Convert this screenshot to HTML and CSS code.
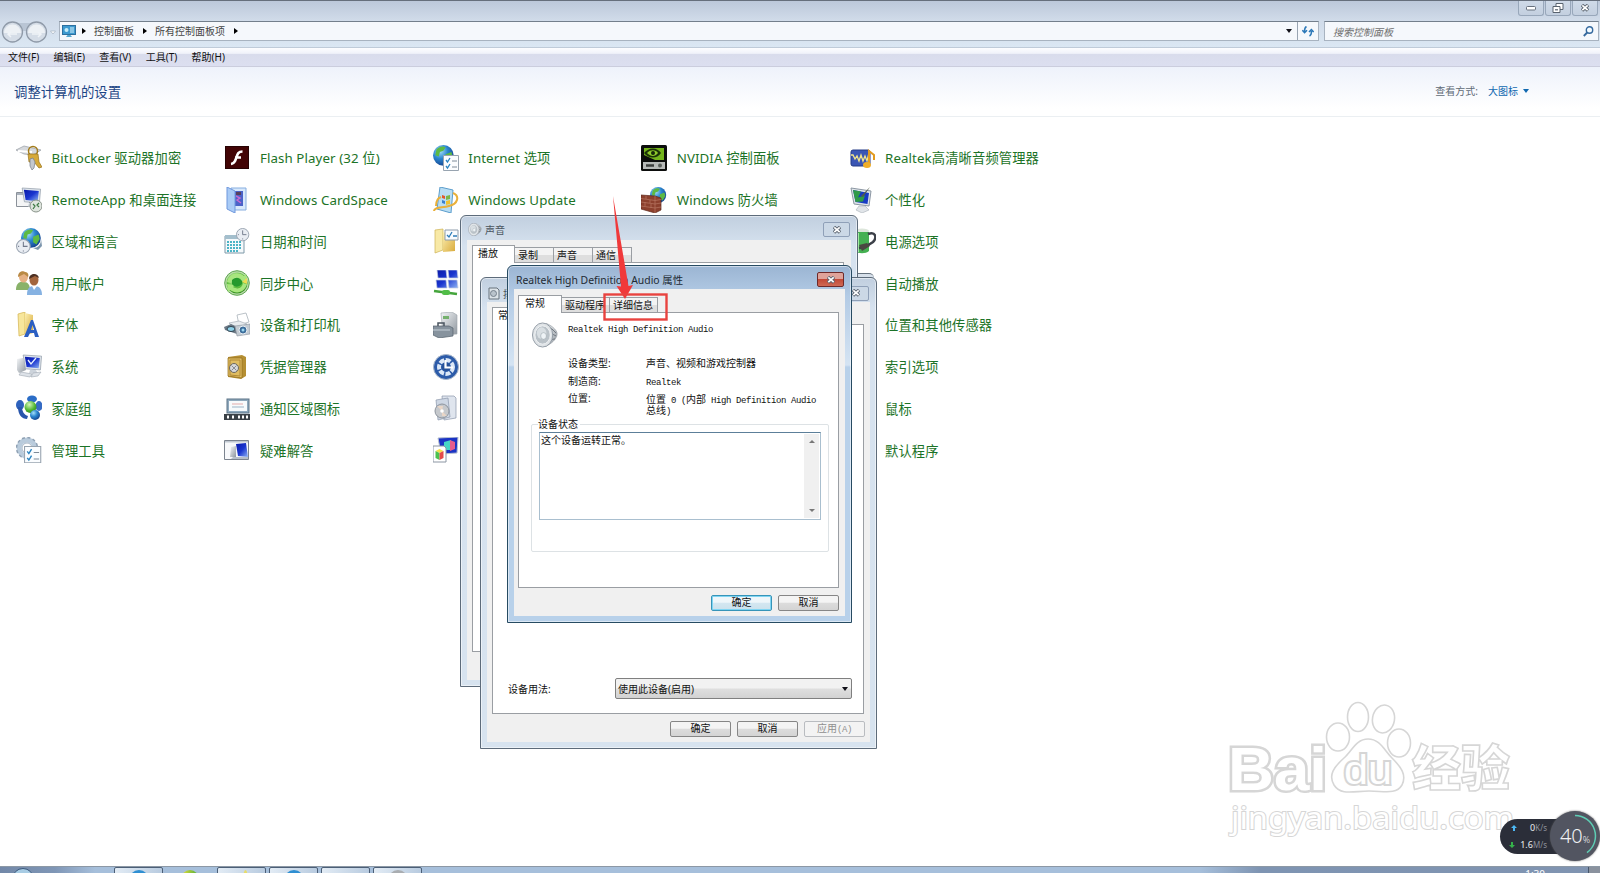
FILE: index.html
```html
<!DOCTYPE html>
<html lang="zh-CN">
<head>
    <meta charset="UTF-8">
    <meta name="viewport" content="width=device-width, initial-scale=1.0">
    <title>所有控制面板项</title>
    <link rel="stylesheet" href="styles.css">
</head>
<body>
    <!-- 共用图形 -->
    <svg class="defs" width="0" height="0">
        <defs>
            <linearGradient id="gBlue" x1="0" y1="0" x2="1" y2="1">
                <stop offset="0" stop-color="#0a1aa8"/><stop offset=".5" stop-color="#1a35cf"/><stop offset="1" stop-color="#8fb4f4"/>
            </linearGradient>
            <radialGradient id="gGlobe" cx=".35" cy=".3" r=".8">
                <stop offset="0" stop-color="#a5e0f8"/><stop offset=".45" stop-color="#2b86cf"/><stop offset="1" stop-color="#123a86"/>
            </radialGradient>
            <radialGradient id="gGreen" cx=".4" cy=".3" r=".8">
                <stop offset="0" stop-color="#d5f7b8"/><stop offset=".6" stop-color="#4fb52f"/><stop offset="1" stop-color="#2b7d1e"/>
            </radialGradient>
            <linearGradient id="gGold" x1="0" y1="0" x2="1" y2="1">
                <stop offset="0" stop-color="#fbeeb0"/><stop offset="1" stop-color="#d9ab3c"/>
            </linearGradient>
            <linearGradient id="gGrey" x1="0" y1="0" x2="1" y2="1">
                <stop offset="0" stop-color="#f4f6f8"/><stop offset="1" stop-color="#8f979f"/>
            </linearGradient>
            <g id="globe">
                <circle cx="9" cy="9" r="9" fill="url(#gGlobe)"/>
                <path d="M3 4c3-3 6-3 8-2l-2 3-3 1-1 4-3-1zM11 8l5-2 1 4-3 5-3-2z" fill="#5dba44"/>
            </g>
            <g id="clock">
                <circle cx="7" cy="7" r="6.5" fill="#e9edf3" stroke="#99a3b0"/>
                <path d="M7 2.5V7h4M7 11v1M2 7h1" fill="none" stroke="#71798a"/>
            </g>
            <g id="checks">
                <path d="M.5.5h15v15H.5z" fill="#fbfdff" stroke="#98a4b0"/>
                <path d="M3 5l1.5 2L7 3M3 11l1.500 2L7 9" fill="none" stroke="#2a83c0" stroke-width="1.300"/>
                <path d="M9 6h5M9 12h5" stroke="#7d8a98"/>
            </g>
            <g id="screen">
                <path d="M1 0l16 1-1 12-13-1z" fill="#dfe5ec" stroke="#8c97a5" stroke-width=".6"/>
                <path d="M2.500 1.500l13 1-1 9-10.500-1z" fill="url(#gBlue)"/>
                <path d="M7 13h5l2 3H6z" fill="#ccd3db"/>
            </g>
            <g id="x">
                <path d="M1 1l6 5.500M7 1L1 6.500" stroke="#5b6470" stroke-width="3.400"/>
                <path d="M1.300 1.300l5.400 4.900M6.700 1.300L1.300 6.200" stroke="#fff" stroke-width="1.700"/>
            </g>
            <g id="speaker">
                <path d="M15 1c7 3 12 8 11 12-1 5-6 9-12 12z" fill="url(#gGrey)" stroke="#8d949c" stroke-width=".6"/>
                <path d="M20 6l5 5M21 12l4 2M19 18l5-1" stroke="#6f767e"/>
                <ellipse cx="11" cy="13" rx="10.500" ry="12.500" fill="#dfe3e6" stroke="#929ba4"/>
                <ellipse cx="11" cy="13" rx="8" ry="9.500" fill="#bac2c8" stroke="#f1f4f6"/>
                <ellipse cx="10" cy="11" rx="5" ry="6" fill="#d9dfe3"/>
                <ellipse cx="12" cy="14" rx="3" ry="3.500" fill="#eef3f6" stroke="#98a2aa" stroke-width=".6"/>
            </g>
        </defs>
    </svg>

    <div class="window">
        <!-- 标题栏 -->
        <div class="titlebar">
            <span class="cap-btn"><svg width="10" height="5"><rect x=".5" y=".5" width="9" height="3.500" rx="1" fill="#fff" stroke="#67707d"/></svg></span>
            <span class="cap-btn"><svg width="12" height="10"><path d="M4 .5h7v6H4z" fill="#fff" stroke="#59636f"/><path d="M1 3.500h7v6H1z" fill="#fff" stroke="#59636f"/><path d="M3 6h3v1.500H3z" fill="#7a838e"/></svg></span>
            <span class="cap-btn"><svg width="8" height="8"><use href="#x"/></svg></span>
        </div>

        <!-- 地址栏 -->
        <div class="navbar">
            <svg class="nav-arrows" width="58" height="24" viewBox="0 0 58 24">
                <path d="M12 2h24v8H12z" fill="#b9c5d4"/>
                <circle cx="12.500" cy="11" r="10" fill="#d5dde7" stroke="#8f9aa8" stroke-width="1.300"/>
                <circle cx="36.500" cy="11" r="10" fill="#d5dde7" stroke="#8f9aa8" stroke-width="1.300"/>
                <path d="M4 12a8.500 8.500 0 0 1 17 0zM28 12a8.500 8.500 0 0 1 17 0z" fill="#edf1f5"/>
                <path d="M8 13h9M11 11l-3 2 3 3M32 13h9M38 11l3 2-3 3" fill="none" stroke="#eff3f7" stroke-width="1.500"/>
                <path d="M50.500 10h5l-2.500 3z" fill="#fff" stroke="#a5b1c0" stroke-width=".7"/>
            </svg>
            <div class="address">
                <svg class="addr-icon" width="14" height="13" viewBox="0 0 14 13">
                    <rect x=".5" y=".5" width="13" height="9" fill="#3d9ad0" stroke="#2c6f9f"/>
                    <circle cx="4.500" cy="5" r="2" fill="#c5ecf9"/><path d="M8 3h4M8 5h4M8 7h4" stroke="#d9f1fb"/>
                    <path d="M4 12h6L8.500 10h-3z" fill="#56a7cf"/>
                </svg>
                <i class="tri-right"></i><span class="crumb">控制面板</span>
                <i class="tri-right"></i><span class="crumb">所有控制面板项</span>
                <i class="tri-right"></i>
                <i class="tri-down push"></i>
                <span class="refresh">
                    <svg width="12" height="11" viewBox="0 0 12 11"><path d="M4.500.5c-2 1-2 3-2 5M.3 4.200l2.300 2.500L5 4.200M7.500 10c2-1 2-3 2-5M7 6l2.400-2.500L11.700 6" fill="none" stroke="#2b78b8" stroke-width="1.500"/></svg>
                </span>
            </div>
            <div class="search">
                <span>搜索控制面板</span>
                <svg width="11" height="11" viewBox="0 0 11 11"><circle cx="6.500" cy="4" r="3.200" fill="#f4fbff" stroke="#35699e" stroke-width="1.400"/><path d="M4.200 6.500L.8 10" stroke="#35699e" stroke-width="1.800"/></svg>
            </div>
        </div>

        <!-- 菜单栏 -->
        <div class="menubar">
            <span>文件(F)</span><span>编辑(E)</span><span>查看(V)</span><span>工具(T)</span><span>帮助(H)</span>
        </div>

        <div class="header">
            <h1>调整计算机的设置</h1>
            <div class="view-mode"><span>查看方式:</span><a>大图标<i class="tri-down"></i></a></div>
        </div>

        <!-- 控制面板项 -->
        <div class="items">
            <div class="col">
                <div class="item">
                    <svg viewBox="0 0 26 26"><path d="M0 5l8-4 17 4-8 5-9-1z" fill="#d6d9dd" stroke="#969ca4" stroke-width=".7"/><path d="M2 6l14 1" stroke="#fff" stroke-width="2"/><circle cx="17" cy="6" r="4.500" fill="none" stroke="#a27b1a" stroke-width="1.500"/><path d="M12 9h10l1 8 3 5-3 1-5-6h-5z" fill="#d6a939" stroke="#96711b" stroke-width=".7"/><path d="M14 14l3-1 2 4-1 6-2 2-2-4z" fill="#c4c8ce" stroke="#747b86" stroke-width=".7"/></svg>
                    <span>BitLocker 驱动器加密</span>
                </div>
                <div class="item">
                    <svg viewBox="0 0 26 26"><path d="M.5 5.500h13v14H.5z" fill="#f4f5f6" stroke="#8b9199"/><path d="M1 6h12v2H1z" fill="#aab2bd"/><use href="#screen" transform="translate(5 1) scale(1.150)"/><circle cx="20" cy="19" r="6" fill="#dfe5de" stroke="#8a948b"/><path d="M17 17l2 2-2 3M23 16l-2 2 2 2" fill="none" stroke="#3d7a44" stroke-width="1.200"/></svg>
                    <span>RemoteApp 和桌面连接</span>
                </div>
                <div class="item">
                    <svg viewBox="0 0 26 26"><path d="M17 20c5 0 8-3 8-9l1 7-4 4z" fill="#7d96ad"/><use href="#globe" transform="translate(5 0) scale(1.100)"/><use href="#clock" transform="translate(0 11) scale(1.050)"/></svg>
                    <span>区域和语言</span>
                </div>
                <div class="item">
                    <svg viewBox="0 0 26 26"><path d="M0 20c0-7 4-9 8-8 4 0 6 3 6 8z" fill="#89b269"/><ellipse cx="7.500" cy="7" rx="4.500" ry="5.500" fill="#e5b184"/><path d="M2 7c0-5 4-7 7-5 3 0 4 3 3 5L8 4z" fill="#b98a45"/><path d="M11 25c0-8 3-9 8-9s7 4 7 9z" fill="#86b2e2"/><ellipse cx="18" cy="10" rx="4.500" ry="5.500" fill="#a3653d"/><path d="M13 9c0-6 9-7 10-1l-4-2z" fill="#4c3023"/><path d="M16 16l2 4 3-4z" fill="#fff"/></svg>
                    <span>用户帐户</span>
                </div>
                <div class="item">
                    <svg viewBox="0 0 26 26"><path d="M2 2l7-2v22l-6 2z" fill="#f7e69c" stroke="#d2b24e" stroke-width=".7"/><path d="M9 1l8 2v18l-8 2z" fill="url(#gGold)"/><path d="M8 25L15 8h2l6 17h-4l-1-4h-4l-2 4zM15 18h3l-1.500-5z" fill="#2c5fc2" fill-rule="evenodd"/></svg>
                    <span>字体</span>
                </div>
                <div class="item">
                    <svg viewBox="0 0 26 26"><path d="M1 5l6-1 3 12-7 3-2-3z" fill="url(#gGrey)"/><use href="#screen" transform="translate(6 1) scale(1.150)"/><path d="M12 6l3 4 5-6" stroke="#e9f2ff" stroke-width="1.300" fill="none"/><path d="M5 18l11 2-2 3-11-2zM17 19l8-1-3 4-7 1z" fill="#dde2e8" stroke="#a0a8b1" stroke-width=".6"/></svg>
                    <span>系统</span>
                </div>
                <div class="item">
                    <svg viewBox="0 0 26 26"><ellipse cx="16" cy="4" rx="5" ry="3.500" fill="#2b6dc7"/><ellipse cx="4" cy="10" rx="4" ry="5" fill="#2e62bd"/><ellipse cx="23" cy="11" rx="3.500" ry="5" fill="#356bc4"/><path d="M2 12c0 8 4 12 9 12l1-3c-4-1-6-5-6-9z" fill="#2956ac"/><circle cx="14.500" cy="12" r="6" fill="url(#gGreen)"/><circle cx="19" cy="20" r="5" fill="url(#gGlobe)"/></svg>
                    <span>家庭组</span>
                </div>
                <div class="item">
                    <svg viewBox="0 0 26 26"><circle cx="11" cy="11" r="8" fill="none" stroke="#b9cbdc" stroke-width="5"/><circle cx="11" cy="11" r="10.500" fill="none" stroke="#8fa1b4" stroke-width="1.500" stroke-dasharray="3 2.500"/><circle cx="11" cy="11" r="5" fill="#fff" stroke="#93a5b7" stroke-width=".8"/><use href="#checks" transform="translate(8 9) scale(1.080)"/></svg>
                    <span>管理工具</span>
                </div>
            </div>

            <div class="col">
                <div class="item">
                    <svg viewBox="0 0 26 26"><rect x="1.500" y="1.500" width="23" height="22" fill="#420405" stroke="#260203"/><path d="M18.500 6.500c-6 0-5 5-7.500 9.500-1 2-2 2.800-4 3M11 12.500h6" fill="none" stroke="#fff" stroke-width="2.600"/></svg>
                    <span>Flash Player (32 位)</span>
                </div>
                <div class="item">
                    <svg viewBox="0 0 26 26"><path d="M7 1h15v22H7z" fill="#d7e8fb" stroke="#87aee0"/><path d="M10 4h9v15h-9z" fill="#4a62c8"/><path d="M12 5h5v3h-5z" fill="#56405e"/><path d="M12 9l4 2-3 2 4 3" fill="none" stroke="#c76ad0" stroke-width="1.500"/><path d="M3 0l8 4v22l-8-4z" fill="#a9cbf6" stroke="#6f97dc"/></svg>
                    <span>Windows CardSpace</span>
                </div>
                <div class="item">
                    <svg viewBox="0 0 26 26"><path d="M1 8h19v17H1z" fill="#f5f9fb" stroke="#7f99a8"/><path d="M1 7h19v4H1z" fill="#a4bfcd"/><path d="M3 14h15M3 17h15M3 20h15M3 23h11" stroke="#4bb4c6" stroke-width="2" stroke-dasharray="2 1"/><use href="#clock" transform="translate(12 0) scale(.95)"/></svg>
                    <span>日期和时间</span>
                </div>
                <div class="item">
                    <svg viewBox="0 0 26 26"><circle cx="13" cy="13" r="12.300" fill="#b9dba9" stroke="#5fa552"/><circle cx="13" cy="13" r="10.500" fill="url(#gGreen)"/><path d="M3 12C5 4 13 1 20 6l2-2 1 8-8-1 2-2c-5-3-9-1-10 4zM23 14c-2 8-10 11-17 6l-2 2-1-8 8 1-2 2c5 3 9 1 10-4z" fill="#a8e67e"/><path d="M8 10c4-4 8-2 10 1v3c-4 4-8 3-10 0z" fill="#259a2c"/><path d="M23 8v6l-5-2z" fill="#eddc54"/></svg>
                    <span>同步中心</span>
                </div>
                <div class="item">
                    <svg viewBox="0 0 26 26"><path d="M13 3l9-2 3 9-10 3z" fill="#fff" stroke="#aab2ba" stroke-width=".8"/><path d="M5 11l10-2 8 3-8 7z" fill="#e8ecef" stroke="#9aa3ac" stroke-width=".6"/><path d="M0 15l7-3 9 4-3 6-12-4z" fill="#6c7985"/><ellipse cx="7" cy="17" rx="4" ry="2.500" fill="#8ed0e8" stroke="#31424f"/><path d="M11 14l15-2v10l-13 2z" fill="#c4cbd2" stroke="#8b949d" stroke-width=".6"/><circle cx="19" cy="18" r="4" fill="#3c6d9b" stroke="#e9eef2"/><circle cx="19" cy="18" r="1.500" fill="#9bd6f0"/></svg>
                    <span>设备和打印机</span>
                </div>
                <div class="item">
                    <svg viewBox="0 0 26 26"><path d="M4 3l14-2 4 2v19l-5 3-13-2z" fill="#b58f33"/><path d="M4 4h14v20L4 22z" fill="#e0bd62" stroke="#8f6c1d" stroke-width=".7"/><path d="M6 6h10v16l-10-1z" fill="none" stroke="#b18a36"/><circle cx="10" cy="14" r="4.500" fill="#d7d9dc" stroke="#6d685c"/><path d="M7.500 11.500l5 5M12.500 11.500l-5 5" stroke="#8a8d92"/></svg>
                    <span>凭据管理器</span>
                </div>
                <div class="item">
                    <svg viewBox="0 0 26 26"><rect x="3" y="4" width="22" height="14" fill="#8fa9bd" stroke="#5d7588"/><rect x="5" y="6" width="18" height="10" fill="#f7fafc"/><path d="M8 9h11" stroke="#e3abab"/><path d="M8 12h12" stroke="#9cb4c7"/><rect y="19" width="26" height="6" fill="#3a4046"/><path d="M3 22h2M8 22h2M14 22h2M18 22h2M22 22h2" stroke="#fff" stroke-width="3"/></svg>
                    <span>通知区域图标</span>
                </div>
                <div class="item">
                    <svg viewBox="0 0 26 26"><path d="M.5 3.500h24v19H.5z" fill="#f8f9fb" stroke="#7c848f"/><path d="M1 4h23v1.500H1z" fill="#c1c8d1"/><path d="M7 10l5-1v11H6z" fill="url(#gGrey)"/><path d="M12 7l10-1 2 14-10-1z" fill="url(#gBlue)"/><path d="M9 20h15v2H7z" fill="#b7bfc8"/></svg>
                    <span>疑难解答</span>
                </div>
            </div>

            <div class="col">
                <div class="item">
                    <svg viewBox="0 0 26 26"><use href="#globe" transform="translate(0 0) scale(1.150)"/><use href="#checks" x="10" y="10"/></svg>
                    <span>Internet 选项</span>
                </div>
                <div class="item">
                    <svg viewBox="0 0 26 26"><path d="M7 0l13 3-2 23-14-4z" fill="#b9ddf3" stroke="#5b9dcc"/><path d="M9 8l3 1v3l-3-1z" fill="#e0582e"/><path d="M13 9l4-1v4l-4 1z" fill="#7db648"/><path d="M9 13l3 1v3l-3-1z" fill="#3b80cd"/><path d="M13 14l4-1v4l-4 1z" fill="#f0c230"/><path d="M20 6c7 3 5 11-4 13-8 2-15 1-15 5M3 19c0-6 2-8 5-9" fill="none" stroke="#e9b03a" stroke-width="2"/></svg>
                    <span>Windows Update</span>
                </div>
                <div class="item">
                    <svg viewBox="0 0 26 26"><path d="M2 2l8-1v21l-8 3z" fill="#f8e9a6" stroke="#cdb153" stroke-width=".7"/><path d="M10 4l12 4v15l-12 1z" fill="url(#gGold)"/><path d="M12 2h13v10H12z" fill="#f8fbfe" stroke="#8e9cab"/><path d="M14 7l2 2 3-5M20 8h4" stroke="#2c7cb8" stroke-width="1.300" fill="none"/></svg>
                </div>
                <div class="item">
                    <svg viewBox="0 0 26 26"><path d="M4 0h9l1 8H5zM15 0h9l1 8h-9zM3 10h10l1 8H4zM15 10h9l1 8h-9z" fill="url(#gBlue)" stroke="#c3cbe0" stroke-width=".7"/><path d="M1 21l23 3" stroke="#45a53c" stroke-width="2.500"/><rect x="9" y="20" width="8" height="5" rx="2" fill="#51bd47"/></svg>
                </div>
                <div class="item">
                    <svg viewBox="0 0 26 26"><path d="M8 1l11-1 5 3v19l-14 1z" fill="url(#gGrey)" stroke="#9aa2aa" stroke-width=".6"/><path d="M10 4h6v3h-6z" fill="#75b16d"/><path d="M0 14h16l4 2v8l-14 2-6-3z" fill="#87939e" stroke="#53606c" stroke-width=".7"/><path d="M5 14v-3h6v3" fill="none" stroke="#4a545f" stroke-width="1.500"/><path d="M0 18h17" stroke="#c6d0d8"/></svg>
                </div>
                <div class="item">
                    <svg viewBox="0 0 26 26"><circle cx="13" cy="13" r="12.500" fill="#2c5ba9" stroke="#abb8ca"/><circle cx="13" cy="13" r="7" fill="none" stroke="#dce8f7" stroke-width="4" stroke-dasharray="5 1.500"/><circle cx="13" cy="13" r="4" fill="#275198"/><path d="M12.500 6v7.500H20" stroke="#fff" stroke-width="2.200" fill="none"/></svg>
                </div>
                <div class="item">
                    <svg viewBox="0 0 26 26"><path d="M9 1h12l2 2v20l-12 2z" fill="#dfe5ee" stroke="#8b97ab" stroke-width=".7"/><path d="M3 5l12-2 2 19-12 3z" fill="#ced7e4" stroke="#8b97ab" stroke-width=".7"/><circle cx="9" cy="16" r="7" fill="#c5c8cc" stroke="#8d949d"/><path d="M9 16L4 11h6zM9 16l5 5H9z" fill="#e9d6c7"/><circle cx="9" cy="16" r="1.800" fill="#fff"/></svg>
                </div>
                <div class="item">
                    <svg viewBox="0 0 26 26"><path d="M5 1l20-1-1 16-16 1z" fill="#1a33c4" stroke="#b8c2d2"/><path d="M11 5l7-2v10h-7z" fill="#48d6c6"/><path d="M17 3l5 2v7l-5 2z" fill="#e75c8b"/><path d="M0 9h11l2 2v14H0z" fill="#fff" stroke="#8c96a3"/><path d="M2.500 14l4-2 4 2-4 2z" fill="#f4e04a"/><path d="M2.500 14l4 2v7l-4-2z" fill="#4cc24e"/><path d="M6.500 16l4-2v7l-4 2z" fill="#e54a4a"/></svg>
                </div>
            </div>

            <div class="col">
                <div class="item">
                    <svg viewBox="0 0 26 26"><rect x="0" y="0" width="26" height="26" rx="1.500" fill="#0c0d0c"/><path d="M3 3h20v12H14L3 10z" fill="#74b51c"/><path d="M3 8c5-6 13-6 17 0-4 6-12 6-17 0z" fill="#1c3307"/><path d="M6 8c4-4 9-3 11 0-3 4-7 4-11 0z" fill="#8ecb2b"/><circle cx="12" cy="8" r="2" fill="#16290a"/><rect x="2" y="17" width="22" height="7" fill="#b7bab8"/><path d="M5 20.500h8" stroke="#3b3e3c" stroke-width="2.500"/><circle cx="19" cy="20.500" r="2" fill="#595e5a"/></svg>
                    <span>NVIDIA 控制面板</span>
                </div>
                <div class="item">
                    <svg viewBox="0 0 26 26"><use href="#globe" transform="translate(9 0) scale(.9)"/><path d="M0 8l14 1 6 2v12l-6 3-14-4z" fill="#8c402d" stroke="#5f2a1d" stroke-width=".7"/><path d="M0 11.500l14 2 6-1M0 15l14 2 6-1M0 19l14 2 6-1M5 9v3M9 13v3M4 15v4M10 17v4M14 9v17" fill="none" stroke="#b87763" stroke-width=".7"/></svg>
                    <span>Windows 防火墙</span>
                </div>
            </div>

            <div class="col">
                <div class="item">
                    <svg viewBox="0 0 26 26"><rect x="1" y="5" width="19" height="16" rx="2" fill="#3b56b4" stroke="#243a86"/><path d="M1 10h2l2 4 2-3 2 5 2-6 2 6 2-5 2 5 2-8" fill="none" stroke="#f3e58b" stroke-width="1.300"/><path d="M19 20V6l5 4v5" fill="none" stroke="#e39b1f" stroke-width="2"/><ellipse cx="17" cy="20" rx="4" ry="3" fill="#f0ae28"/></svg>
                    <span>Realtek高清晰音频管理器</span>
                </div>
                <div class="item">
                    <svg viewBox="0 0 26 26"><path d="M1 1l20 3-2 15-15-2z" fill="#dfe5ea" stroke="#8c97a3"/><path d="M3 3l16 3-1.500 11-12-2z" fill="#173bc4"/><path d="M3 3l8 1.500-3 6 7-2-2 6-7.500.5z" fill="#2f9a48"/><path d="M20 0l-9 9 2 1z" fill="#525d4a"/><path d="M9 19h6l4 4-7 3-6-3z" fill="#e1e5e9" stroke="#a7afb7" stroke-width=".6"/></svg>
                    <span>个性化</span>
                </div>
                <div class="item">
                    <svg viewBox="0 0 26 26"><ellipse cx="12" cy="3" rx="7" ry="2.500" fill="#dde6db"/><path d="M5 4h14v19c-3 3-11 3-14 0z" fill="#45b052"/><path d="M8 5v19" stroke="#a5e8a5" stroke-width="2"/><path d="M18 6c8-3 9 4 5 8l-8 5-6 1" fill="none" stroke="#3c4048" stroke-width="2.500"/><path d="M9 17l8-2 3 3-8 5z" fill="#4a4742"/></svg>
                    <span>电源选项</span>
                </div>
                <div class="item"><span class="no-icon">自动播放</span></div>
                <div class="item"><span class="no-icon">位置和其他传感器</span></div>
                <div class="item"><span class="no-icon">索引选项</span></div>
                <div class="item"><span class="no-icon">鼠标</span></div>
                <div class="item"><span class="no-icon">默认程序</span></div>
            </div>
        </div>
    </div>

    <!-- 声音 -->
    <div class="dialog dlg-sound">
        <div class="dlg-title">
            <svg width="14" height="13" viewBox="0 0 27 26"><use href="#speaker"/></svg>
            <span>声音</span>
            <b class="close"><svg width="8" height="8"><use href="#x"/></svg></b>
        </div>
        <div class="dlg-client">
            <div class="tabs"><span class="tab on">播放</span><span class="tab">录制</span><span class="tab">声音</span><span class="tab">通信</span></div>
            <div class="page"></div>
        </div>
    </div>

    <div class="window-tip"></div>

    <!-- 扬声器属性 -->
    <div class="dialog dlg-speaker">
        <div class="dlg-title">
            <svg width="12" height="13" viewBox="0 0 12 13"><path d="M1 1h8l2 2v9H1z" fill="#dce3e8" stroke="#67727d"/><circle cx="5.500" cy="6.500" r="3" fill="#b9c3cb" stroke="#76818c"/></svg>
            <span>扬</span>
            <b class="close"><svg width="8" height="8"><use href="#x"/></svg></b>
        </div>
        <div class="dlg-client">
            <div class="tabs"><span class="tab on">常</span></div>
            <div class="page">
                <div class="usage">
                    <label>设备用法:</label>
                    <div class="select"><span>使用此设备(启用)</span><i class="tri-down"></i></div>
                </div>
            </div>
            <div class="buttons"><span class="btn">确定</span><span class="btn">取消</span><span class="btn off">应用<tt>(A)</tt></span></div>
        </div>
    </div>

    <!-- 声卡属性 -->
    <div class="dialog dlg-audio">
        <div class="dlg-title">
            <span>Realtek High Definition Audio 属性</span>
            <b class="close"><svg width="8" height="8"><use href="#x"/></svg></b>
        </div>
        <div class="dlg-client">
            <div class="tabs"><span class="tab on">常规</span><span class="tab">驱动程序</span><span class="tab">详细信息</span></div>
            <div class="page">
                <div class="device">
                    <svg width="26" height="26" viewBox="0 0 27 26"><use href="#speaker"/></svg>
                    <tt>Realtek High Definition Audio</tt>
                </div>
                <dl class="info">
                    <dt>设备类型:</dt><dd>声音、视频和游戏控制器</dd>
                    <dt>制造商:</dt><dd><tt>Realtek</tt></dd>
                    <dt>位置:</dt><dd>位置<tt> 0 (</tt>内部<tt> High Definition Audio</tt><br>总线<tt>)</tt></dd>
                </dl>
                <fieldset class="status">
                    <legend>设备状态</legend>
                    <div class="textbox">
                        <span>这个设备运转正常。</span>
                        <div class="scroll"><i class="tri-up"></i><i class="tri-down"></i></div>
                    </div>
                </fieldset>
            </div>
            <div class="buttons"><span class="btn default">确定</span><span class="btn">取消</span></div>
        </div>
    </div>

    <!-- 标注 -->
    <svg class="mark" width="70" height="130" viewBox="0 0 70 130">
        <path d="M13 0l15.500 90 4.500-1-8 14-8.500-13 4.500.5z" fill="#f0393a"/>
        <rect x="4.500" y="98.500" width="62" height="25" fill="none" stroke="#e8433f" stroke-width="2.400"/>
    </svg>

    <!-- 水印 -->
    <svg class="watermark" width="300" height="150" viewBox="0 0 300 150">
        <g fill="#fff" stroke="#d6d6d6" stroke-width="1.600">
            <ellipse cx="117" cy="37" rx="11.500" ry="14"/>
            <ellipse cx="137" cy="17" rx="10.500" ry="14.500"/>
            <ellipse cx="162.500" cy="19" rx="11" ry="14" transform="rotate(10 162.500 19)"/>
            <ellipse cx="178" cy="43" rx="11.500" ry="14"/>
            <path d="M147 39c-12 0-16 12-24 19-10 9-16 17-10 27 7 11 20 6 35 6s27 4 33-6c5-10-1-18-10-27-8-8-12-19-24-19z"/>
            <text class="wm-bai" x="7" y="90" textLength="99" lengthAdjust="spacingAndGlyphs">Bai</text>
            <text class="wm-du" x="123" y="84" textLength="48" lengthAdjust="spacingAndGlyphs">du</text>
            <text class="wm-cn" x="191" y="86" textLength="98" lengthAdjust="spacingAndGlyphs">经验</text>
            <text class="wm-url" x="10" y="129" textLength="283" lengthAdjust="spacingAndGlyphs">jingyan.baidu.com</text>
        </g>
    </svg>

    <!-- 网速悬浮球 -->
    <div class="speed">
        <div class="rates">
            <p><svg width="6" height="6"><path d="M3 0l3 3H4v3H2V3H0z" fill="#4db8f5"/></svg><b>0</b>K/s</p>
            <p><svg width="6" height="6"><path d="M3 6l3-3H4V0H2v3H0z" fill="#35b14a"/></svg><b>1.6</b>M/s</p>
        </div>
        <div class="ball">
            <svg width="50" height="50" viewBox="0 0 50 50"><path d="M25 4.500A20.500 20.500 0 0 1 37 41.600" fill="none" stroke="#5ecdb4" stroke-width="1.500"/></svg>
            <span>40<small>%</small></span>
        </div>
    </div>

    <!-- 任务栏 -->
    <div class="taskbar">
        <i class="orb"></i>
        <i class="task t-blue"></i><i class="leaf"></i><i class="task t-yellow"></i><i class="task t-blue"></i><i class="task"></i><i class="task t-grey"></i>
        <span class="clock">1:30</span>
        <i class="peek"></i>
    </div>
</body>
</html>
```

FILE: styles.css
```css
* {
    margin: 0;
    padding: 0;
    box-sizing: border-box;
}

body {
    width: 1600px;
    height: 873px;
    overflow: hidden;
    position: relative;
    background: #fff;
    font-family: 'Noto Sans', 'Noto Sans CJK SC', sans-serif;
    font-size: 10px;
    color: #111;
    white-space: nowrap;
}

.defs {
    position: absolute;
}

svg {
    flex-shrink: 0;
}

tt {
    font-family: 'Liberation Mono', monospace;
    font-size: 9px;
    letter-spacing: -0.4px;
    white-space: pre;
}

/* 小三角 */
.tri-right {
    border: 3px solid transparent;
    border-left: 4px solid #000;
    border-right: 0;
}

.tri-down {
    border: 3px solid transparent;
    border-top: 4px solid #101018;
    border-bottom: 0;
}

.tri-up {
    border: 3px solid transparent;
    border-bottom: 3px solid #777;
    border-top: 0;
}

/* 主窗口 */
.titlebar {
    height: 20px;
    display: flex;
    justify-content: flex-end;
    gap: 1px;
    padding-right: 2px;
    border-top: 1px solid #666f7c;
    background: linear-gradient(#bcc8da, #d0dbe9);
}

.cap-btn {
    width: 26px;
    height: 15px;
    display: flex;
    align-items: center;
    justify-content: center;
    border: 1px solid #98a7ba;
    border-top: 0;
    border-radius: 0 0 3px 3px;
    background: linear-gradient(#cfdae8, #c3cfdf);
}

.navbar {
    height: 28px;
    display: flex;
    padding: 1px 1px 0 0;
    background: linear-gradient(#d0dbe9, #dbe7f3);
    border-bottom: 1px solid #bfcbd9;
}

.nav-arrows {
    margin-right: 1px;
}

.address,
.search {
    height: 20px;
    display: flex;
    align-items: center;
    background: #f5f8fc;
    border: 1px solid #a8b3c0;
    border-top-color: #737f8c;
}

.address {
    width: 1260px;
    padding-left: 2px;
    color: #444;
}

.addr-icon {
    margin-right: 6px;
}

.crumb {
    margin: -1px 9px 0 8px;
}

.push {
    margin-left: auto;
}

.refresh {
    width: 21px;
    height: 18px;
    margin-left: 5px;
    display: flex;
    align-items: center;
    justify-content: center;
    border-left: 1px solid #98a4b2;
}

.search {
    flex: 1;
    margin-left: 5px;
    padding: 0 4px 0 8px;
    justify-content: space-between;
    font-style: italic;
    color: #707070;
}

.menubar {
    height: 19px;
    display: flex;
    gap: 14.3px;
    padding-left: 8px;
    line-height: 18px;
    background: linear-gradient(#fdfdff 0, #f0f2fa 30%, #d9dcec 34%, #dcdff0 100%);
    border-bottom: 1px solid #cbcddd;
}

.header {
    height: 50px;
    display: flex;
    align-items: center;
    justify-content: space-between;
    padding: 0 71px 1px 14px;
    background: linear-gradient(#eef2fb, #fff 85%);
    border-bottom: 1px solid #ebeff2;
}

.header h1 {
    font-size: 13.4px;
    font-weight: 400;
    color: #1c4585;
}

.view-mode {
    display: flex;
    gap: 10px;
    padding-bottom: 1px;
    color: #5f6a76;
}

.view-mode a {
    display: flex;
    align-items: center;
    gap: 5px;
    color: #1068b0;
}

.view-mode .tri-down {
    border-top-color: #1068b0;
}

.items {
    display: flex;
    padding: 20px 0 0 16px;
}

.col {
    width: 208.4px;
}

.item {
    height: 41.75px;
    display: flex;
    align-items: center;
    gap: 9.5px;
    font-size: 13.3px;
    letter-spacing: 0.1px;
    color: #1c7327;
}

.item svg {
    width: 26px;
    height: 26px;
}

.no-icon {
    margin-left: 35.5px;
}

/* 对话框 */
.dialog {
    position: absolute;
    isolation: isolate;
    display: flex;
    flex-direction: column;
    padding: 0 6px 6px;
    border: 1px solid #5d6b7a;
    border-radius: 6px 6px 0 0;
    background: linear-gradient(#c1cfdf 0, #d6e2ef 30px, #d7e3ef 100%);
    box-shadow: inset 0 0 0 1px rgba(255, 255, 255, 0.5);
}

.dlg-title {
    height: 24px;
    display: flex;
    align-items: center;
    padding: 3px 0 0 1px;
    color: #4b5560;
}

.dlg-title span {
    margin-left: 3px;
}

.close {
    width: 27px;
    height: 15px;
    margin-left: auto;
    margin-right: 1px;
    display: flex;
    align-items: center;
    justify-content: center;
    border: 1px solid #8fa0b8;
    border-radius: 2px;
    background: #cbd8e6;
}

.dlg-client {
    flex: 1;
    display: flex;
    flex-direction: column;
    padding: 4px 5px 0 5px;
    background: #f0f0f0;
}

.tabs {
    display: flex;
    align-items: flex-end;
    height: 18px;
}

.tab {
    height: 15px;
    padding-left: 3px;
    line-height: 14px;
    border: 1px solid #9a9ea3;
    border-left-width: 0;
    border-bottom: 0;
    background: linear-gradient(#f3f3f3 50%, #dedede 50%);
}

.tab.on {
    position: relative;
    z-index: 1;
    height: 18px;
    margin-bottom: -1px;
    padding-left: 5px;
    line-height: 15px;
    border-left-width: 1px;
    background: #fff;
}

.page {
    background: #fff;
    border: 1px solid #9a9ea3;
}

.buttons {
    display: flex;
    justify-content: flex-end;
    gap: 6px;
    padding-top: 7px;
}

.btn {
    width: 61px;
    height: 16px;
    line-height: 13px;
    text-align: center;
    border: 1px solid #868686;
    border-radius: 2px;
    background: linear-gradient(#f4f4f4 45%, #dcdcdc 50%, #d4d4d4);
}

.btn.default {
    border-color: #3794b8;
    box-shadow: inset 0 0 0 1px #7fd5f3;
    background: linear-gradient(#eef6fa 45%, #d3e7f1 50%, #cbe1ec);
}

.btn.off {
    color: #8f8f8f;
    border-color: #b9bcc0;
    background: #f3f3f3;
}

.dlg-sound {
    left: 460px;
    top: 215px;
    width: 398px;
    height: 472px;
}

.dlg-sound .tab {
    width: 39px;
}

.dlg-sound .tab.on {
    width: 43px;
}

.dlg-sound .page {
    height: 390px;
    width: 372px;
}

.window-tip {
    position: absolute;
    left: 858px;
    top: 273px;
    width: 16px;
    height: 12px;
    border-top: 1px solid #66727e;
    border-radius: 0 5px 0 0;
    background: #d7e0ea;
}

.dlg-speaker {
    left: 480px;
    top: 277px;
    width: 397px;
    height: 472px;
}

.dlg-speaker .dlg-title {
    padding-top: 6px;
}

.dlg-speaker .tab.on {
    width: 43px;
}

.dlg-speaker .page {
    height: 390px;
    width: 372px;
}

.usage {
    display: flex;
    align-items: center;
    padding: 353px 11px 0 15px;
}

.select {
    width: 237px;
    height: 21px;
    margin-left: auto;
    padding: 0 3px 0 2px;
    display: flex;
    align-items: center;
    justify-content: space-between;
    border: 1px solid #7f7f7f;
    border-radius: 2px;
    background: linear-gradient(#f2f2f2 48%, #dfdfdf 52%, #d2d2d2);
}

.dlg-audio {
    left: 507px;
    top: 265px;
    width: 345px;
    height: 358px;
    border-color: #274b62;
    background: linear-gradient(#9bb5d3 0, #b3cbe5 30px, #d5e4f3 99px, #b8d1ea 101px, #b8d1ea 100%);
}

.dlg-audio .dlg-title {
    height: 23px;
    padding: 4px 0 0;
    font-size: 10.4px;
    color: #222a33;
}

.dlg-audio .dlg-title span {
    margin-left: 2px;
}

.dlg-audio .close {
    border-color: #6e2a2a;
    background: linear-gradient(#dfa39a 45%, #c24a38 50%, #cf6a55);
}

.dlg-audio .dlg-client {
    padding: 5px 6px 0 4px;
}

.dlg-audio .tab {
    width: 48px;
}

.dlg-audio .tab.on {
    width: 44px;
    padding-left: 6px;
}

.dlg-audio .page {
    height: 276px;
}

.device {
    display: flex;
    padding: 9px 0 0 13px;
}

.device tt {
    margin-left: 10px;
    line-height: 17px;
}

.info {
    display: grid;
    grid-template-columns: 78px auto;
    grid-template-rows: 17.5px 17.5px 27px;
    padding: 7px 0 0 49px;
    line-height: 17px;
}

.info dd:last-child {
    padding-top: 4px;
    line-height: 10px;
}

.info dd:last-child tt {
    line-height: 8px;
}

.status {
    height: 135px;
    margin: 0 9px 0 12px;
    padding: 1px 7px 0;
    border: 1px solid #dde2e5;
    border-radius: 2px;
}

.status legend {
    padding: 0 2px 0 0;
    margin-left: -1px;
    line-height: 14px;
}

.textbox {
    height: 88px;
    display: flex;
    justify-content: space-between;
    padding: 1px;
    line-height: 13px;
    border: 1px solid #a9bfcf;
    border-top-color: #5c7f99;
}

.scroll {
    width: 15px;
    display: flex;
    flex-direction: column;
    align-items: center;
    justify-content: space-between;
    padding: 6px 0;
    background: #f0f0f0;
}

.scroll .tri-down {
    border-top: 3px solid #777;
}

/* 红色箭头与方框 */
.mark {
    position: absolute;
    left: 600px;
    top: 196px;
}

/* 水印 */
.watermark {
    position: absolute;
    left: 1221px;
    top: 700px;
}

.wm-bai {
    font: 700 61px 'Liberation Sans', sans-serif;
    paint-order: stroke;
    stroke-width: 5px;
}

.wm-du {
    font: 400 40px 'Liberation Sans', sans-serif;
    stroke-width: 4px;
    paint-order: stroke;
}

.wm-cn {
    font: 900 49px 'Noto Sans CJK SC', sans-serif;
}

.wm-url {
    font: 400 31px 'Noto Sans', sans-serif;
    stroke-width: 2px;
    paint-order: stroke;
}

/* 网速悬浮球 */
.speed {
    position: absolute;
    left: 1500px;
    top: 811px;
    width: 100px;
    height: 50px;
    display: flex;
    align-items: center;
}

.rates {
    width: 75px;
    height: 35px;
    padding-right: 28px;
    border-radius: 18px 0 0 18px;
    background: #2b2e39;
    color: #8e929b;
    font-size: 8px;
    line-height: 17.5px;
    text-align: right;
}

.rates b {
    font-size: 9px;
    color: #eef0f3;
    margin-left: 13px;
    font-weight: 400;
}

.rates p + p b {
    margin-left: 5px;
}

.ball {
    position: relative;
    width: 50px;
    height: 50px;
    margin-left: -25px;
    flex-shrink: 0;
    border-radius: 50%;
    background: #525561;
    box-shadow: 0 0 2px #555;
    color: #f0f1f4;
    font-size: 20px;
    font-weight: 300;
    line-height: 50px;
    text-align: center;
}

.ball svg {
    position: absolute;
    left: 0;
    top: 0;
}

.ball small {
    font-size: 9px;
}

/* 任务栏 */
.taskbar {
    position: absolute;
    left: 0;
    top: 866px;
    width: 1600px;
    height: 7px;
    display: flex;
    gap: 3px;
    overflow: hidden;
    border-top: 1px solid #8c98a5;
    background: linear-gradient(90deg, #7288a8 0, #7f96b6 55px, #a6bfdb 95px, #a6bfdb 1200px, #7e94b2 1260px, #8094b1 100%);
}

.orb {
    width: 22px;
    height: 22px;
    margin: 1px 77px 0 12px;
    border: 1px solid #3b587c;
    border-radius: 50%;
    background: #a8cce4;
}

.task {
    position: relative;
    width: 49px;
    height: 12px;
    border: 1px solid #4c5f77;
    border-radius: 2px;
    background: linear-gradient(100deg, #e3ecf5, #b7cadf);
}

.task::after {
    content: "";
    position: absolute;
    left: 14px;
    top: 2px;
    width: 20px;
    height: 20px;
    border-radius: 50%;
}

.t-blue::after {
    background: #2f8fd2;
}

.t-yellow::after {
    left: 25px;
    width: 5px;
    background: #e7dc6a;
}

.t-grey::after {
    background: #a9adb1;
}

.leaf {
    width: 18px;
    height: 18px;
    margin: 3px 15px 0;
    border-radius: 50%;
    background: linear-gradient(90deg, #e9df39, #49ad3b);
}

.clock {
    margin-left: auto;
    margin-right: 40px;
    line-height: 14px;
    color: #fff;
}

.peek {
    width: 12px;
    border-left: 1px solid #46566b;
    background: #8a929e;
}
```
